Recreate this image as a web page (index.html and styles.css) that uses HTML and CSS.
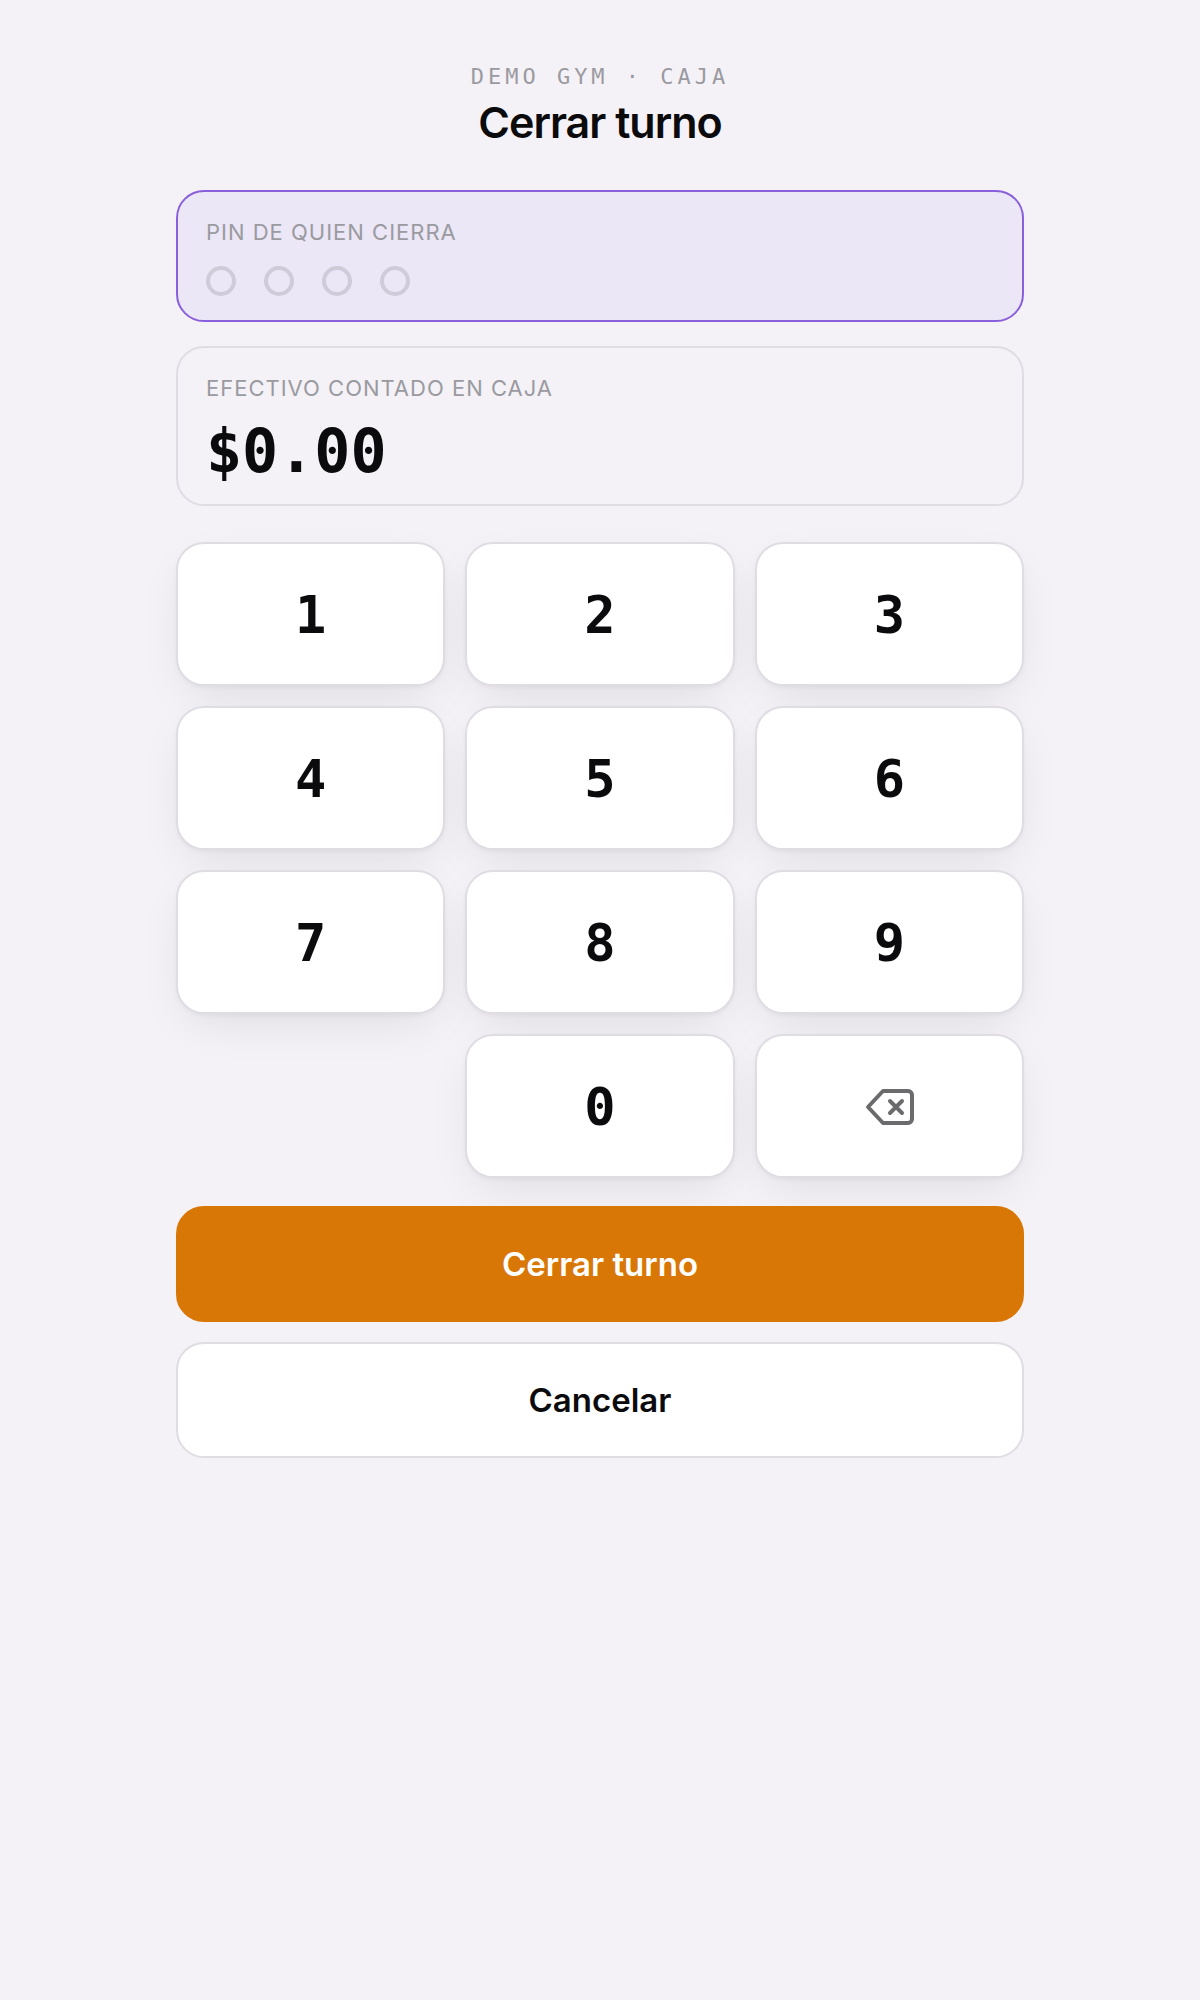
FILE: index.html
```html
<!DOCTYPE html>
<html lang="es">
<head>
<meta charset="utf-8">
<meta name="viewport" content="width=device-width, initial-scale=1">
<title>Cerrar turno</title>
<link rel="stylesheet" href="styles.css">
</head>
<body>
<main class="shift">
  <header class="header">
    <p class="eyebrow">DEMO GYM · CAJA</p>
    <h1 class="title">Cerrar turno</h1>
  </header>

  <form class="form">
    <div class="fields">
      <button type="button" class="field field-active" aria-pressed="true">
        <span class="field-label">PIN DE QUIEN CIERRA</span>
        <span class="dots">
          <span class="dot"></span>
          <span class="dot"></span>
          <span class="dot"></span>
          <span class="dot"></span>
        </span>
      </button>
      <button type="button" class="field" aria-pressed="false">
        <span class="field-label">EFECTIVO CONTADO EN CAJA</span>
        <span class="amount">$0.00</span>
      </button>
    </div>

    <div class="keypad">
      <button type="button" class="key">1</button>
      <button type="button" class="key">2</button>
      <button type="button" class="key">3</button>
      <button type="button" class="key">4</button>
      <button type="button" class="key">5</button>
      <button type="button" class="key">6</button>
      <button type="button" class="key">7</button>
      <button type="button" class="key">8</button>
      <button type="button" class="key">9</button>
      <button type="button" class="key key-zero">0</button>
      <button type="button" class="key" aria-label="Borrar">
        <svg class="key-icon" viewBox="0 0 52 52" fill="none" stroke="currentColor" stroke-width="4" stroke-linecap="round" stroke-linejoin="round" aria-hidden="true">
          <path d="M20 10H45a4 4 0 0 1 4 4V38a4 4 0 0 1-4 4H20L5 26Z"/>
          <path d="M27 20l12 12M39 20L27 32"/>
        </svg>
      </button>
    </div>

    <div class="actions">
      <button type="submit" class="action action-primary">Cerrar turno</button>
      <button type="button" class="action">Cancelar</button>
    </div>
  </form>
</main>
</body>
</html>
```
FILE: styles.css
```css
:root {
  --bg: #f4f2f7;
  --ink: #0b0b0d;
  --muted: #9a9aa0;
  --line: #dfdde4;
  --accent: #8a5fdc;
  --accent-soft: #ebe7f6;
  --warning: #d97706;
  --sans: "Inter", "Liberation Sans", sans-serif;
  --mono: "DejaVu Sans Mono", "Liberation Mono", monospace;
}

* {
  box-sizing: border-box;
}

body {
  margin: 0;
  min-height: 100vh;
  background: var(--bg);
  color: var(--ink);
  font-family: var(--sans);
}

button {
  margin: 0;
  color: inherit;
  font: inherit;
  cursor: pointer;
}

.shift {
  max-width: 896px;
  margin: 0 auto;
  padding: 64px 24px;
}

.header {
  margin-bottom: 40px;
  text-align: center;
}

.eyebrow {
  margin: 0;
  color: var(--muted);
  font-family: var(--mono);
  font-size: 22px;
  line-height: 26px;
  letter-spacing: 4px;
}

.title {
  margin: 4px 0 0;
  font-size: 43px;
  font-weight: 600;
  line-height: 56px;
  letter-spacing: -1px;
}

.fields {
  display: grid;
  gap: 24px;
  margin-bottom: 36px;
}

.field {
  display: flex;
  flex-direction: column;
  align-items: flex-start;
  width: 100%;
  padding: 24px 28px;
  border: 2px solid var(--line);
  border-radius: 28px;
  background: transparent;
  text-align: left;
}

.field-active {
  border-color: var(--accent);
  background: var(--accent-soft);
}

.field-label {
  color: var(--muted);
  font-size: 22px;
  line-height: 32px;
  letter-spacing: 1px;
}

.dots {
  display: flex;
  gap: 28px;
  padding-top: 18px;
}

.dot {
  width: 30px;
  height: 30px;
  border: 4px solid #cfcbd9;
  border-radius: 50%;
}

.amount {
  padding-top: 18px;
  font-family: var(--mono);
  font-size: 60px;
  font-weight: 700;
  line-height: 58px;
}

.keypad {
  display: grid;
  grid-template-columns: repeat(3, 1fr);
  gap: 20px;
  margin-bottom: 28px;
}

.key {
  display: flex;
  align-items: center;
  justify-content: center;
  height: 144px;
  padding: 2px 0 0;
  border: 2px solid var(--line);
  border-radius: 28px;
  background: #fff;
  box-shadow: 0 2px 4px rgba(11, 11, 13, 0.04), 0 16px 48px -12px rgba(11, 11, 13, 0.1);
  font-family: var(--mono);
  font-size: 52px;
  font-weight: 700;
  line-height: 64px;
}

.key-zero {
  grid-column: 2;
}

.key-icon {
  width: 52px;
  height: 52px;
  color: #6b6b6e;
}

.actions {
  display: grid;
  gap: 20px;
}

.action {
  height: 116px;
  border: 2px solid var(--line);
  border-radius: 28px;
  background: #fff;
  font-size: 33px;
  font-weight: 600;
}

.action-primary {
  border-color: var(--warning);
  background: var(--warning);
  color: #fff;
}
```
